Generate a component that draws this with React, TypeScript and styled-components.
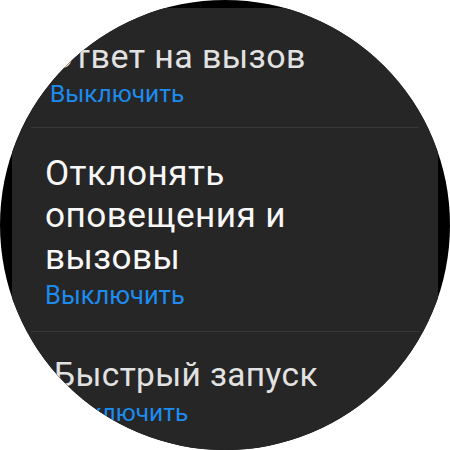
import React from "react";
import styled, { createGlobalStyle } from "styled-components";

const Global = createGlobalStyle`
  html, body { margin: 0; padding: 0; background: #ffffff; }
  body { font-family: Roboto, "Noto Sans", "Liberation Sans", sans-serif; }
`;

const Watch = styled.div`
  width: 450px;
  height: 450px;
  border-radius: 50%;
  overflow: hidden;
  background: #000000;
  display: flex;
  flex-direction: column;
`;

const Screen = styled.div`
  flex: 1;
  margin: 8px 12px 0;
  background: #262626;
  display: flex;
  flex-direction: column;
  padding-top: 27px;
`;

const Item = styled.div<{ $left: number; $top: number; $bottom: number }>`
  display: flex;
  flex-direction: column;
  padding: ${(p) => p.$top}px 0 ${(p) => p.$bottom}px ${(p) => p.$left}px;
`;

const Title = styled.div<{ $dim?: boolean; $size: number }>`
  font-size: ${(p) => p.$size}px;
  line-height: 42px;
  letter-spacing: 0.4px;
  color: ${(p) => (p.$dim ? "#e2e2e2" : "#f7f7f7")};
  white-space: nowrap;
`;

const Status = styled.div<{ $size: number }>`
  font-size: ${(p) => p.$size}px;
  line-height: 34px;
  color: #1d8cf0;
  white-space: nowrap;
`;

const Divider = styled.div`
  height: 1px;
  margin: 0 19px;
  background: #383838;
`;

export default function App() {
  return (
    <>
      <Global />
      <Watch>
        <Screen>
          <Item $left={38} $top={0} $bottom={16}>
            <Title $dim $size={34}>Ответ на вызов</Title>
            <Status $size={24.5}>Выключить</Status>
          </Item>
          <Divider />
          <Item $left={33} $top={24} $bottom={19}>
            <Title $size={35.2}>
              Отклонять
              <br />
              оповещения и
              <br />
              вызовы
            </Title>
            <Status $size={25.5}>Выключить</Status>
          </Item>
          <Divider />
          <Item $left={42} $top={22} $bottom={16}>
            <Title $dim $size={33.4}>Быстрый запуск</Title>
            <Status $size={24.5}>Выключить</Status>
          </Item>
        </Screen>
      </Watch>
    </>
  );
}
